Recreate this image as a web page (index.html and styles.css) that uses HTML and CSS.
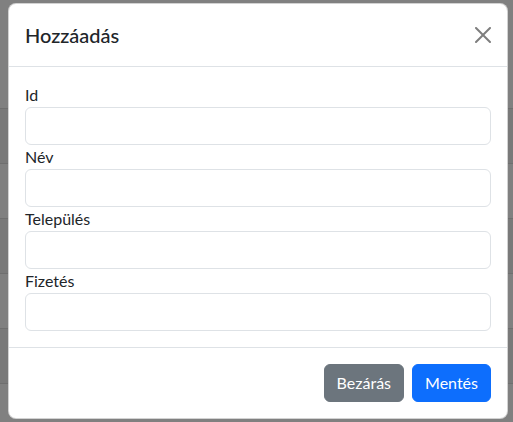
FILE: index.html
```html
<!DOCTYPE html>
<html lang="hu">
<head>
<meta charset="utf-8">
<title>Hozzáadás</title>
<link rel="stylesheet" href="styles.css">
</head>
<body>
<div class="page">
  <div class="row r0"></div>
  <div class="row r1"></div>
  <div class="row r2"></div>
  <div class="row r1"></div>
  <div class="row r2"></div>
  <div class="row r1"></div>
  <div class="row rlast"></div>
</div>
<div class="modal">
  <div class="modal-header">
    <h5 class="modal-title">Hozzáadás</h5>
    <button class="btn-close" type="button" aria-label="Close">
      <svg viewBox="0 0 16 16" width="16" height="16"><path d="M.293.293a1 1 0 0 1 1.414 0L8 6.586 14.293.293a1 1 0 1 1 1.414 1.414L9.414 8l6.293 6.293a1 1 0 0 1-1.414 1.414L8 9.414l-6.293 6.293a1 1 0 0 1-1.414-1.414L6.586 8 .293 1.707a1 1 0 0 1 0-1.414z"/></svg>
    </button>
  </div>
  <div class="modal-body">
    <label class="field-label" for="f-id">Id</label>
    <input class="form-control" id="f-id" type="text">
    <label class="field-label" for="f-nev">Név</label>
    <input class="form-control" id="f-nev" type="text">
    <label class="field-label" for="f-tel">Település</label>
    <input class="form-control" id="f-tel" type="text">
    <label class="field-label" for="f-fiz">Fizetés</label>
    <input class="form-control" id="f-fiz" type="text">
  </div>
  <div class="modal-footer">
    <button class="btn btn-secondary" type="button">Bezárás</button>
    <button class="btn btn-primary" type="button">Mentés</button>
  </div>
</div>
</body>
</html>
```
FILE: styles.css
```css
* { box-sizing: border-box; }
html, body {
  margin: 0;
  padding: 0;
  width: 513px;
  height: 422px;
  overflow: hidden;
}
body {
  font-family: Lato, "Noto Sans", sans-serif;
  font-size: 16px;
  line-height: 1.5;
  color: #212529;
  background: #808080;
  position: relative;
}
.page {
  display: flex;
  flex-direction: column;
  height: 422px;
}
.row {
  height: 55px;
  flex: none;
  border-bottom: 1px solid #6f6f6f;
}
.r0 { height: 109px; background: #808080; }
.r1 { background: #797979; }
.r2 { background: #808080; }
.rlast { flex: 1; height: auto; border-bottom: 0; background: #808080; }

.modal {
  position: absolute;
  left: 8px;
  top: 3px;
  width: 500px;
  height: 416px;
  background: #fff;
  border: 1px solid rgba(0,0,0,.175);
  border-radius: 8px;
  display: flex;
  flex-direction: column;
}
.modal-header {
  display: flex;
  align-items: center;
  justify-content: space-between;
  padding: 16px;
  border-bottom: 1px solid #dee2e6;
}
.modal-title {
  margin: 0;
  font-size: 20px;
  font-weight: 500;
  line-height: 1.5;
}
.btn-close {
  width: 24px;
  height: 24px;
  padding: 4px;
  margin: -4px -4px -4px 0;
  border: 0;
  background: transparent;
  opacity: .5;
  display: flex;
  align-items: center;
  justify-content: center;
}
.btn-close svg { fill: #000; display: block; }

.modal-body {
  padding: 16px;
  display: flex;
  flex-direction: column;
}
.field-label {
  display: block;
  line-height: 24px;
}
.form-control {
  display: block;
  width: 100%;
  height: 38px;
  padding: 6px 12px;
  font: inherit;
  border: 1px solid #dee2e6;
  border-radius: 6px;
  background: #fff;
}
.modal-footer {
  display: flex;
  justify-content: flex-end;
  align-items: center;
  padding: 12px;
  border-top: 1px solid #dee2e6;
}
.btn {
  margin: 4px;
  height: 38px;
  padding: 6px 12px;
  border: 1px solid transparent;
  border-radius: 6px;
  font: inherit;
  color: #fff;
}
.btn-secondary { background: #6c757d; border-color: #6c757d; }
.btn-primary { background: #0d6efd; border-color: #0d6efd; }
```
